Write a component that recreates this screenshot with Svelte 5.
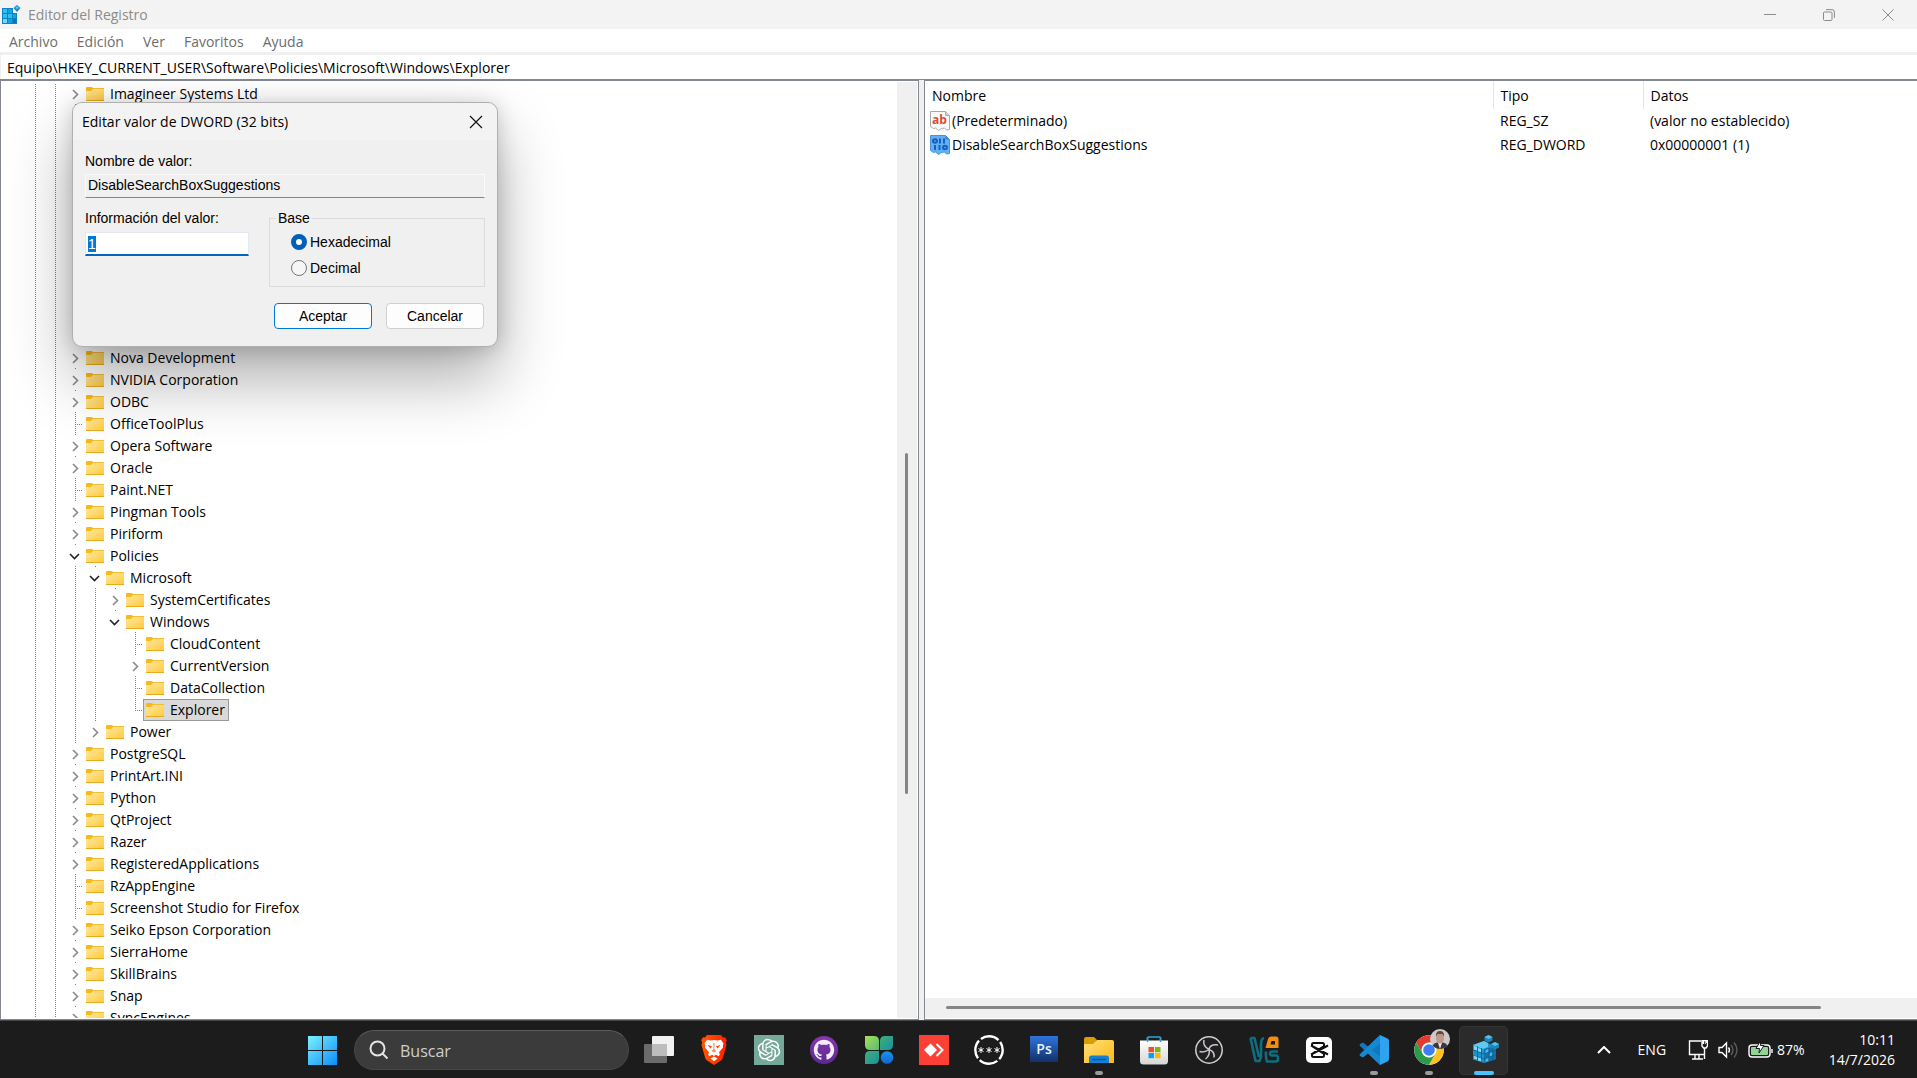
<script lang="ts">
	import { onMount } from 'svelte';

	interface Key {
		name: string;
		level?: number;
		state?: 'closed' | 'open' | 'leaf';
		last?: boolean;
		covered?: number;
	}

	const keys: Key[] = [
		{ name: 'Imagineer Systems Ltd' },
		{ name: '', covered: 11 },
		{ name: 'Nova Development' },
		{ name: 'NVIDIA Corporation' },
		{ name: 'ODBC' },
		{ name: 'OfficeToolPlus', state: 'leaf' },
		{ name: 'Opera Software' },
		{ name: 'Oracle' },
		{ name: 'Paint.NET', state: 'leaf' },
		{ name: 'Pingman Tools' },
		{ name: 'Piriform' },
		{ name: 'Policies', state: 'open' },
		{ name: 'Microsoft', level: 1, state: 'open' },
		{ name: 'SystemCertificates', level: 2 },
		{ name: 'Windows', level: 2, state: 'open', last: true },
		{ name: 'CloudContent', level: 3, state: 'leaf' },
		{ name: 'CurrentVersion', level: 3 },
		{ name: 'DataCollection', level: 3, state: 'leaf' },
		{ name: 'Explorer', level: 3, state: 'leaf', last: true },
		{ name: 'Power', level: 1, last: true },
		{ name: 'PostgreSQL' },
		{ name: 'PrintArt.INI' },
		{ name: 'Python' },
		{ name: 'QtProject' },
		{ name: 'Razer' },
		{ name: 'RegisteredApplications' },
		{ name: 'RzAppEngine', state: 'leaf' },
		{ name: 'Screenshot Studio for Firefox', state: 'leaf' },
		{ name: 'Seiko Epson Corporation' },
		{ name: 'SierraHome' },
		{ name: 'SkillBrains' },
		{ name: 'Snap' },
		{ name: 'SyncEngines' }
	];

	const values = [
		{ name: '(Predeterminado)', type: 'REG_SZ', data: '(valor no establecido)' },
		{ name: 'DisableSearchBoxSuggestions', type: 'REG_DWORD', data: '0x00000001 (1)' }
	];

	const menus = ['Archivo', 'Edición', 'Ver', 'Favoritos', 'Ayuda'];

	const apps = [
		{ id: 'taskview', label: 'Vista de tareas' },
		{ id: 'brave', label: 'Brave' },
		{ id: 'chatgpt', label: 'ChatGPT' },
		{ id: 'github', label: 'GitHub Desktop' },
		{ id: 'clover', label: 'Clover' },
		{ id: 'anydesk', label: 'AnyDesk' },
		{ id: 'stars', label: 'Contraseñas' },
		{ id: 'ps', label: 'Photoshop' },
		{ id: 'files', label: 'Explorador de archivos', open: true },
		{ id: 'store', label: 'Microsoft Store' },
		{ id: 'obs', label: 'OBS Studio' },
		{ id: 'vs', label: 'VS' },
		{ id: 'capcut', label: 'CapCut' },
		{ id: 'vscode', label: 'Visual Studio Code', open: true },
		{ id: 'chrome', label: 'Chrome', open: true },
		{ id: 'regedit', label: 'Editor del Registro', active: true }
	];

	const rowHeight = 22;

	let selected = $state('Explorer');
	let path = $state('Equipo\\HKEY_CURRENT_USER\\Software\\Policies\\Microsoft\\Windows\\Explorer');
	let value = $state('1');
	let base = $state('hex');
	let valueInput: HTMLInputElement;

	// Windows is the last key of its level, so its children carry no guide there
	function guides(level: number): boolean[] {
		return Array.from({ length: level + 2 }, (_, i) => i < 4);
	}

	onMount(() => {
		valueInput.focus();
		valueInput.select();
	});
</script>

{#snippet folder()}
	<svg class="folder" viewBox="0 0 18 14" aria-hidden="true">
		<rect x="0" y="2" width="18" height="12" fill="url(#folder-fill)" />
		<path d="M0 1q0-1 1-1h5l1 1v1l-2 2H0z" fill="#f9b916" />
		<rect x="7" y="1" width="11" height="1" fill="#f3bd3a" />
		<rect x="0" y="13" width="18" height="1" fill="#e9aa1c" />
	</svg>
{/snippet}

<svg class="defs" width="0" height="0" aria-hidden="true">
	<defs>
		<linearGradient id="folder-fill" x1="0" y1="0" x2="1" y2="1">
			<stop offset="0" stop-color="#ffe9a0" />
			<stop offset="1" stop-color="#ffc93c" />
		</linearGradient>
		<linearGradient id="start-fill" x1="0" y1="0" x2="30" y2="30" gradientUnits="userSpaceOnUse">
			<stop offset="0" stop-color="#7df3ff" />
			<stop offset="1" stop-color="#0a8bf8" />
		</linearGradient>
		<linearGradient id="brave-fill">
			<stop offset="0" stop-color="#ff5a00" />
			<stop offset="1" stop-color="#ff2000" />
		</linearGradient>
		<linearGradient id="github-fill" x1="0" y1="0" x2="0" y2="1">
			<stop offset="0" stop-color="#8a35b0" />
			<stop offset="1" stop-color="#5b2a90" />
		</linearGradient>
		<linearGradient id="leaf-a" x1="0" y1="0" x2="1" y2="1">
			<stop offset="0" stop-color="#a5e05a" />
			<stop offset="1" stop-color="#5cba70" />
		</linearGradient>
		<linearGradient id="leaf-b" x1="0" y1="0" x2="1" y2="1">
			<stop offset="0" stop-color="#3fb07c" />
			<stop offset="1" stop-color="#1c8f9c" />
		</linearGradient>
		<linearGradient id="dot-fill" x1="0" y1="0" x2="0" y2="1">
			<stop offset="0" stop-color="#1596ef" />
			<stop offset="1" stop-color="#1463d0" />
		</linearGradient>
		<linearGradient id="ps-fill" x1="0" y1="0" x2="0" y2="1">
			<stop offset="0" stop-color="#2f74dc" />
			<stop offset="1" stop-color="#12306a" />
		</linearGradient>
		<linearGradient id="files-fill" x1="0" y1="0" x2="1" y2="1">
			<stop offset="0" stop-color="#ffe07a" />
			<stop offset="1" stop-color="#fdb913" />
		</linearGradient>
		<linearGradient id="store-fill" x1="0" y1="0" x2="0" y2="1">
			<stop offset="0" stop-color="#ffffff" />
			<stop offset="1" stop-color="#d6d6d6" />
		</linearGradient>
	</defs>
</svg>

<div class="desktop">
	<main class="window">
		<header class="titlebar">
			<svg class="app-icon" viewBox="0 0 20 20" aria-hidden="true">
				<rect x="1" y="3" width="15" height="16" fill="#0a84c4" />
				<path d="M2 4h4v4H2zM2 9h4v4H2zM7 9h4v4H7z" fill="#35bdf2" />
				<path d="M7 4h4v4H7zM12 9h3v4h-3zM7 14h4v4H7z" fill="#12a3e6" />
				<path d="M2 14h4v4H2z" fill="#6fd9fb" />
				<path d="M12 14h3v4h-3z" fill="#0478b8" />
				<path d="M12 2h4v6h-4z" fill="#f3f3f3" />
				<path d="M16 0l3.500 3-3.500 4-3.500-4z" fill="#1787bf" />
				<path d="M16 1l2 2-2 1-2-1z" fill="#5fc8ee" />
			</svg>
			<h1>Editor del Registro</h1>
			<div class="caption-buttons">
				<button aria-label="Minimizar">
					<svg viewBox="0 0 12 12"><path d="M0 5.5h12" /></svg>
				</button>
				<button aria-label="Restaurar">
					<svg viewBox="0 0 12 12">
						<rect x="0.5" y="3" width="8.5" height="8.5" rx="1" />
						<path d="M3 .6h6q2.400 0 2.400 2.400v6" />
					</svg>
				</button>
				<button aria-label="Cerrar">
					<svg viewBox="0 0 12 12"><path d="M.5.5l11 11M11.500.5l-11 11" /></svg>
				</button>
			</div>
		</header>

		<nav class="menubar">
			{#each menus as menu (menu)}
				<button>{menu}</button>
			{/each}
		</nav>

		<input class="address" aria-label="Ruta" bind:value={path} />

		<div class="panes">
			<section class="tree-pane">
				<ul class="tree">
					{#each keys as key, i (i)}
						{#if key.covered}
							<li class="row" style:height="{key.covered * rowHeight}px">
								<span class="guide"></span>
								<span class="guide"></span>
							</li>
						{:else}
							{@const state = key.state ?? 'closed'}
							<li class="row">
								{#each guides(key.level ?? 0) as drawn, g (g)}
									<span class={drawn ? 'guide' : 'blank'}></span>
								{/each}
								{#if state === 'leaf'}
									<span class="branch" class:last={key.last}></span>
								{:else}
									<button class="toggle" aria-label={key.name} aria-expanded={state === 'open'}>
										<svg viewBox="0 0 18 22">
											{#if state === 'open'}
												<path class="open" d="M5 9l4.500 4.500L14 9" />
												<rect x="30" y="21" width="1" height="1" />
											{:else}
												<path d="M8 7l4.500 4.500L8 16" />
											{/if}
											{#if !key.last}
												<rect x="10" y="21" width="1" height="1" />
											{/if}
										</svg>
									</button>
								{/if}
								<button
									class="key"
									class:selected={selected === key.name}
									onclick={() => (selected = key.name)}
								>
									{@render folder()}
									{key.name}
								</button>
							</li>
						{/if}
					{/each}
				</ul>
				<div class="vscroll"><span></span></div>
			</section>

			<section class="value-pane">
				<table>
					<colgroup>
						<col class="col-name" />
						<col class="col-type" />
						<col />
					</colgroup>
					<thead>
						<tr><th>Nombre</th><th>Tipo</th><th>Datos</th></tr>
					</thead>
					<tbody>
						{#each values as row, i (row.name)}
							<tr>
								<td>
									<span class="value-name">
										<svg viewBox="0 0 20 20" aria-hidden="true">
											{#if i === 0}
												<path
													d="M.5.5h15l4 4v14l-3 .5-2-2-3 .5-3 2-3-2.500-2 .5-3-2z"
													fill="#fafafa"
													stroke="#a8a8a8"
												/>
												<path d="M15.500.5v4h4" fill="#d5d5d5" stroke="#a8a8a8" />
												<text x="2" y="13" class="glyph-ab">ab</text>
											{:else}
												<path
													d="M.5.5h15l4 4v14l-3 .5-2-2-3 .5-3 2-3-2.500-2 .5-3-2z"
													fill="#62b0f4"
													stroke="#4a93d4"
												/>
												<path d="M15.500.5v4h4" fill="#3f86c8" />
												<ellipse cx="5" cy="6" rx="2" ry="1.700" class="bits" />
												<ellipse cx="15" cy="12.500" rx="2" ry="1.700" class="bits" />
												<path d="M10 3.500v5M14 3.500v5M5 10v5M9.500 10v5" class="bits" />
											{/if}
										</svg>
										{row.name}
									</span>
								</td>
								<td>{row.type}</td>
								<td>{row.data}</td>
							</tr>
						{/each}
					</tbody>
				</table>
				<div class="hscroll"><span></span></div>
			</section>
		</div>
	</main>

	<div class="dialog" role="dialog" aria-labelledby="dialog-title">
		<header>
			<h2 id="dialog-title">Editar valor de DWORD (32 bits)</h2>
			<button aria-label="Cerrar">
				<svg viewBox="0 0 12 12"><path d="M0 0l12 12M12 0L0 12" /></svg>
			</button>
		</header>
		<form onsubmit={(e) => e.preventDefault()}>
			<label for="value-name">Nombre de valor:</label>
			<input id="value-name" readonly value="DisableSearchBoxSuggestions" />
			<div class="columns">
				<div class="data">
					<label for="value-data">Información del valor:</label>
					<input id="value-data" bind:this={valueInput} bind:value />
				</div>
				<fieldset>
					<legend>Base</legend>
					<label><input type="radio" value="hex" bind:group={base} />Hexadecimal</label>
					<label><input type="radio" value="dec" bind:group={base} />Decimal</label>
				</fieldset>
			</div>
			<div class="actions">
				<button class="default">Aceptar</button>
				<button type="button">Cancelar</button>
			</div>
		</form>
	</div>

	<footer class="taskbar">
		<button class="app" aria-label="Inicio">
			<svg viewBox="0 0 30 30">
				<path d="M0 1h14v14H0zM15 1h14v14H15zM0 16h14v14H0zM15 16h14v14H15z" fill="url(#start-fill)" />
			</svg>
		</button>
		<label class="search">
			<svg viewBox="0 0 20 20" aria-hidden="true">
				<circle cx="8.500" cy="8.500" r="7" />
				<path d="M13.500 13.500l5 5" />
			</svg>
			<input type="text" placeholder="Buscar" aria-label="Buscar" />
		</label>

		{#each apps as app (app.id)}
			<button class="app" class:open={app.open} class:active={app.active} aria-label={app.label}>
				<svg viewBox="0 0 30 30">
					{#if app.id === 'taskview'}
						<rect x="8" y="1" width="22" height="20" rx="1" fill="#f2f2f2" />
						<rect x="0" y="9" width="23" height="19" rx="1" fill="#6b6b6b" />
						<rect x="8" y="9" width="15" height="12" fill="#bdbdbd" />
					{:else if app.id === 'brave'}
						<path
							d="M8 0h14l2 2.500 2-.3 1.800 3-1 2.300.7 2.500-3.500 12.500q-.6 2-2 3L15 30l-7-4.500q-1.400-1-2-3L2.500 10l.7-2.500-1-2.300 1.800-3 2 .3z"
							fill="url(#brave-fill)"
						/>
						<path
							d="M15 5l3.500.6L22 4.800l2.500 3.700-.7 2 .2 2-4 4.700.8 2-1 2-3-1.500-1.800 1.300-1.800-1.300-3 1.500-1-2 .8-2-4-4.700.2-2-.7-2L8 4.800l3.500.8z"
							fill="#fff"
						/>
						<path d="M8.500 10l4.500 1.200-1.500 2.300zM21.500 10L17 11.200l1.500 2.300z" fill="#ff4410" />
						<path d="M14.300 8h1.400l-.3 6 2 2-2.400 1.600-2.400-1.600 2-2z" fill="#ff8a64" />
						<path d="M15 21.500l3.500 2-3.500 2.800-3.500-2.800z" fill="#fff" />
					{:else if app.id === 'chatgpt'}
						<rect width="30" height="30" fill="#74a99a" />
						<path
							transform="translate(3.700 3.700) scale(.94)"
							fill="#fff"
							d="M22.2819 9.8211a5.9847 5.9847 0 0 0-.5157-4.9108 6.0462 6.0462 0 0 0-6.5098-2.9A6.0651 6.0651 0 0 0 4.9807 4.1818a5.9847 5.9847 0 0 0-3.9977 2.9 6.0462 6.0462 0 0 0 .7427 7.0966 5.98 5.98 0 0 0 .511 4.9107 6.051 6.051 0 0 0 6.5146 2.9001A5.9847 5.9847 0 0 0 13.2599 24a6.0557 6.0557 0 0 0 5.7718-4.2058 5.9894 5.9894 0 0 0 3.9977-2.9001 6.0557 6.0557 0 0 0-.7475-7.0729zm-9.022 12.6081a4.4755 4.4755 0 0 1-2.8764-1.0408l.1419-.0804 4.7783-2.7582a.7948.7948 0 0 0 .3927-.6813v-6.7369l2.02 1.1686a.071.071 0 0 1 .038.0615v5.5826a4.504 4.504 0 0 1-4.4945 4.4849zm-9.6607-4.1254a4.4708 4.4708 0 0 1-.5346-3.0137l.142.0852 4.783 2.7582a.7712.7712 0 0 0 .7806 0l5.8428-3.3685v2.3324a.0804.0804 0 0 1-.0332.0615L9.74 19.9502a4.4992 4.4992 0 0 1-6.1408-1.6464zM2.3408 7.8956a4.485 4.485 0 0 1 2.3655-1.9728V11.6a.7664.7664 0 0 0 .3879.6765l5.8144 3.3543-2.0201 1.1685a.0757.0757 0 0 1-.071 0l-4.8303-2.7865A4.504 4.504 0 0 1 2.3408 7.8956zm16.5963 3.8558L13.1038 8.364 15.1192 7.2a.0757.0757 0 0 1 .071 0l4.8303 2.7913a4.4944 4.4944 0 0 1-.6765 8.1042v-5.6772a.79.79 0 0 0-.407-.667zm2.0107-3.0231l-.142-.0852-4.7735-2.7818a.7759.7759 0 0 0-.7854 0L9.409 9.2297V6.8974a.0662.0662 0 0 1 .0284-.0615l4.8303-2.7866a4.4992 4.4992 0 0 1 6.6802 4.66zM8.3065 12.863l-2.02-1.1638a.0804.0804 0 0 1-.038-.0567V6.0742a4.4992 4.4992 0 0 1 7.3757-3.4537l-.142.0805L8.704 5.459a.7948.7948 0 0 0-.3927.6813zm1.0976-2.3654l2.602-1.4998 2.6069 1.4998v2.9994l-2.5974 1.4997-2.6067-1.4997Z"
						/>
					{:else if app.id === 'github'}
						<circle cx="15" cy="15" r="14" fill="url(#github-fill)" />
						<path
							transform="translate(4.800 4.500) scale(.85)"
							fill="#f2edf6"
							d="M12 .297c-6.63 0-12 5.373-12 12 0 5.303 3.438 9.8 8.205 11.385.6.113.82-.258.82-.577 0-.285-.01-1.04-.015-2.04-3.338.724-4.042-1.61-4.042-1.61C4.422 18.07 3.633 17.7 3.633 17.7c-1.087-.744.084-.729.084-.729 1.205.084 1.838 1.236 1.838 1.236 1.07 1.835 2.809 1.305 3.495.998.108-.776.417-1.305.76-1.605-2.665-.3-5.466-1.332-5.466-5.93 0-1.31.465-2.38 1.235-3.22-.135-.303-.54-1.523.105-3.176 0 0 1.005-.322 3.3 1.23.96-.267 1.98-.399 3-.405 1.02.006 2.04.138 3 .405 2.28-1.552 3.285-1.23 3.285-1.23.645 1.653.24 2.873.12 3.176.765.84 1.23 1.91 1.23 3.22 0 4.61-2.805 5.625-5.475 5.92.42.36.81 1.096.81 2.22 0 1.606-.015 2.896-.015 3.286 0 .315.21.69.825.57C20.565 22.092 24 17.592 24 12.297c0-6.627-5.373-12-12-12"
						/>
					{:else if app.id === 'clover'}
						<path d="M1 1h9q5 0 5 5v9H6q-5 0-5-5z" fill="url(#leaf-a)" />
						<path d="M29 1v9q0 5-5 5h-8V6q0-5 5-5z" fill="url(#leaf-b)" />
						<path d="M1 29v-8q0-5 5-5h9v8q0 5-5 5z" fill="url(#leaf-b)" />
						<circle cx="23" cy="22.500" r="6.300" fill="url(#dot-fill)" />
					{:else if app.id === 'anydesk'}
						<rect width="30" height="30" fill="#fb4136" />
						<path d="M11.500 8.500L18 15l-6.500 6.500L5 15z" fill="#fff" />
						<path d="M17.500 9l6 6-6 6" class="anydesk-arrow" />
					{:else if app.id === 'stars'}
						<circle cx="15" cy="15" r="13.700" class="stars-ring" />
						<path
							d="M7 12v6M4.500 13.500l5 3M9.500 13.500l-5 3M15 12v6M12.500 13.500l5 3M17.500 13.500l-5 3M23 12v6M20.500 13.500l5 3M25.500 13.500l-5 3"
							stroke="#fff"
							stroke-width="1"
						/>
					{:else if app.id === 'ps'}
						<rect x="1" y="1" width="28" height="26" fill="url(#ps-fill)" />
						<text x="15" y="19" class="glyph-ps">Ps</text>
					{:else if app.id === 'files'}
						<path d="M0 4q0-2 2-2h8l3 3-3 4H0z" fill="#dc9c05" />
						<path d="M0 9h9l4-4h15q2 0 2 2v21H0z" fill="url(#files-fill)" />
						<path d="M5 28v-5q0-2.500 2.500-2.500h15q2.500 0 2.500 2.500v5z" fill="#1282d6" />
						<path d="M9 24.500h12" stroke="#0b5299" stroke-width="1.500" stroke-linecap="round" />
					{:else if app.id === 'store'}
						<path d="M8.500 6V3q0-1 1-1h11q1 0 1 1v3" class="store-handle" />
						<path d="M1 5.500h28V26q0 3.500-3.500 3.500h-21Q1 29.500 1 26z" fill="url(#store-fill)" />
						<path d="M8.500 2v5M21.500 2v5" stroke="#26a5e0" stroke-width="1.500" />
						<path d="M9.500 12h5.500v5.200H9.500z" fill="#f25022" />
						<path d="M16 12h5.500v5.200H16z" fill="#7fba00" />
						<path d="M9.500 18h5.500v5.200H9.500z" fill="#00a4ef" />
						<path d="M16 18h5.500v5.200H16z" fill="#ffb900" />
					{:else if app.id === 'obs'}
						<circle cx="15" cy="15" r="13.200" fill="#211f22" stroke="#cfcfcf" stroke-width="1.500" />
						<path
							d="M10 5q-1.500 6 5 9.500M15 14.500q1-5.500 9-4.500M15 14.500q1.500 5.500-3.500 9.500M15 14.500q-5 3.500-9.500 2M15 14.500q6 2 5 8"
							fill="none"
							stroke="#c8c8c8"
							stroke-width="1.500"
						/>
					{:else if app.id === 'vs'}
						<path d="M1.500 3h4l4.500 19M1.500 3l5 23h4l1.500-4V9q0-5 3-6" class="vs-line" />
						<path d="M29 16.500h-5.500q-2.500 0-2.500 2t2.500 2h3.500q2 0 2 3t-2 3H18q-1.500-4-1-10" class="vs-line" />
						<path
							d="M29.500 13H16.500l2.500-9q.6-2.500 3-2.500h5q2.500 0 2.500 2.500zM22.500 6l-1 3.500H26V6z"
							fill="#f28c13"
							fill-rule="evenodd"
						/>
					{:else if app.id === 'capcut'}
						<rect x="2" y="2" width="26" height="26" rx="5" fill="#fff" />
						<path
							d="M24 10.500L8 19v1.500q0 1.500 1.500 1.500h9q1.500 0 1.500-1.500V19L7 10.500M24 19.500L8 11V9.500Q8 8 9.500 8h9Q20 8 20 9.500V11L7 19.500"
							class="capcut-line"
						/>
					{:else if app.id === 'vscode'}
						<path d="M21 0l-12 11.500-5-4-2.500 1.300q-1.800 1 0 2.700L21.500 30z" fill="#1277bd" />
						<path d="M21 30L9 18.500l-5 4-2.500-1.300q-1.800-1 0-2.700L21 0v8.500L13 15l8 6.500z" fill="#1489d2" />
						<path d="M21 0l7.500 3.500Q30 4.300 30 6v18q0 1.700-1.500 2.500L21 30z" fill="#2ea3f0" />
					{:else if app.id === 'chrome'}
						<circle cx="15" cy="15" r="14.800" fill="#fff" />
						<path d="M2.200 7.600A14.800 14.800 0 0 1 27.800 7.600H15A7.400 7.400 0 0 0 8.600 18.700z" fill="#e33b2e" />
						<path d="M27.800 7.600A14.800 14.800 0 0 1 15 29.800l6.400-11.100A7.400 7.400 0 0 0 15 7.600z" fill="#fcc31e" />
						<path d="M15 29.800A14.800 14.800 0 0 1 2.200 7.600l6.400 11.100a7.400 7.400 0 0 0 12.800 0z" fill="#2a9c48" />
						<circle cx="15" cy="15" r="7.200" fill="#fff" />
						<circle cx="15" cy="15" r="5.800" fill="#3d7ff0" />
						<circle cx="26" cy="4" r="10" fill="#cfc8c8" />
						<path d="M18.500 10.500q2-3 5-3h5q3 0 5 3a10 10 0 0 1-15 0z" fill="#3b3638" />
						<path d="M24 8h4l-2 6z" fill="#e9e6e6" />
						<ellipse cx="26" cy="3" rx="4" ry="5.500" fill="#bf9a8c" />
						<path d="M22 1.500q-.5-5.500 4-5.500t4 5.500l-1.500-2.500h-5z" fill="#5b4a44" />
					{:else}
						<path d="M4 10l11-4 8 4 4 2v12l-12 4-11-3.500z" fill="#1f94cb" />
						<path d="M4 10l11-4 4 2v4l-5 2z" fill="#5fc9f0" />
						<path d="M15 14l12-3v13l-12 4z" fill="#1273ab" />
						<path d="M5 11l3 1v3.500l-3-1zM5 20l3 1v3.500l-3-1zM9 22l4 1v3.500l-4-1zM9 13l3 1v3.500l-3-1z" fill="#7fd8f7" />
						<path d="M16.500 15l3-1v3.500l-3 1zM20.500 18l3-1v3.500l-3 1zM16.500 23.500l3-1V26l-3 1z" fill="#45b7e8" />
						<path d="M8.500 11.500v14M12.500 13v14M20 13v13M23.700 12v13M4 15l11 4 12-4M4 20l11 4 12-4" class="reg-grid" />
						<path d="M19.500 0l4 2v3.500l-4 2-4-2V2z" fill="#1b86bd" />
						<path d="M19.500 0l4 2-4 2-4-2z" fill="#55bfe8" />
						<path d="M26 7l4 2v3.500l-4 2-4-2V9z" fill="#1b86bd" />
						<path d="M26 7l4 2-4 2-4-2z" fill="#55bfe8" />
					{/if}
				</svg>
			</button>
		{/each}

		<div class="tray">
			<button aria-label="Mostrar iconos ocultos">
				<svg width="14" height="8" viewBox="0 0 14 8"><path d="M1 7l6-6 6 6" class="tray-line thick" /></svg>
			</button>
			<button class="language">ENG</button>
			<button class="status" aria-label="Red, volumen y batería">
				<svg width="20" height="20" viewBox="0 0 20 20">
					<path d="M13 1H1.500v13.500H16M7 15v3.500M11 15v3.500M4 19h11M16.500 8v11" class="tray-line" />
					<path d="M14 .5h5.500V6L18 8h-2.500L14 6zM15.500.5v3.500M18 .5v3.500" class="tray-line" />
				</svg>
				<svg width="20" height="18" viewBox="0 0 20 18">
					<path d="M1 6.500h3L8.500 2v14L4 11.500H1zM10.500 6.500q2 2.500 0 5" class="tray-line" />
					<path d="M13 4q4 5 0 10M16 1.500q6 7.500 0 15" class="tray-line faded" />
				</svg>
				<svg width="25" height="18" viewBox="0 0 25 18">
					<rect x="1" y="4" width="21" height="12" rx="3" class="tray-line" />
					<rect x="3" y="6" width="17" height="8" rx="1" fill="#8fd694" />
					<path d="M24 8v4" class="tray-line" />
					<path d="M12.500 0L8 7.500h3.500L11 12l5-7.500h-3.500z" fill="#fff" stroke="#1c1c1c" />
				</svg>
				<span>87%</span>
			</button>
			<button class="clock">
				<span>10:11</span>
				<span>14/7/2026</span>
			</button>
		</div>
	</footer>
</div>

<style>
	:global(body) {
		margin: 0;
		background: #fff;
	}

	.desktop {
		position: relative;
		display: flex;
		flex-direction: column;
		height: 100vh;
		overflow: hidden;
		font-family: 'Segoe UI', 'Open Sans', sans-serif;
		font-size: 14px;
		line-height: 20px;
		color: #000;
	}

	.defs {
		position: absolute;
	}

	button,
	input {
		font: inherit;
		color: inherit;
		margin: 0;
		padding: 0;
		border: 0;
		border-radius: 0;
		background: none;
		outline: none;
		box-sizing: border-box;
	}

	svg {
		display: block;
		flex: none;
	}

	.window {
		flex: 1;
		min-height: 0;
		display: flex;
		flex-direction: column;
	}

	.titlebar {
		display: flex;
		align-items: center;
		height: 29px;
		padding-left: 1px;
		background: #f3f3f3;
		color: #8b8b8b;
	}

	.app-icon {
		width: 20px;
		height: 20px;
	}

	h1,
	h2 {
		margin: 0;
		font-size: 14px;
		font-weight: 400;
	}

	h1 {
		flex: 1;
		padding-left: 7px;
	}

	.caption-buttons {
		display: flex;
	}

	.caption-buttons button {
		display: grid;
		place-items: center;
		width: 59px;
		height: 28px;
	}

	.caption-buttons svg {
		width: 12px;
		height: 12px;
		fill: none;
		stroke: #8b8b8b;
	}

	.menubar {
		display: flex;
		gap: 3px;
		height: 23px;
		padding: 2px 0 0 1px;
		box-sizing: border-box;
		color: #6d6d6d;
	}

	.menubar button {
		padding: 0 8px;
	}

	.address {
		height: 27px;
		padding: 0 6px;
		border-top: 3px solid #f0f0f0;
		border-left: 1px solid #f0f0f0;
	}

	.panes {
		flex: 1;
		min-height: 0;
		display: flex;
		gap: 5px;
		border-top: 1px solid #828790;
		background: #f0f0f0;
	}

	.tree-pane,
	.value-pane {
		box-sizing: border-box;
		border: 1px solid #828790;
		background: #fff;
		overflow: hidden;
	}

	/* the splitter keeps its place when the window is resized */
	.tree-pane {
		display: flex;
		width: 919px;
		max-width: 60%;
		padding: 1px 1px 1px 0;
	}

	.tree {
		flex: 1;
		height: 100%;
		margin: 0;
		padding: 1px 0 0 24px;
		box-sizing: border-box;
		list-style: none;
		overflow: hidden;
	}

	.row {
		display: flex;
		height: 22px;
	}

	.guide,
	.blank {
		width: 20px;
		flex: none;
	}

	.guide {
		background: repeating-linear-gradient(#fff 0 1px, #808080 1px 2px) 10px 0 / 1px 100% no-repeat;
	}

	.branch {
		width: 18px;
		flex: none;
		background:
			repeating-linear-gradient(#fff 0 1px, #808080 1px 2px) 10px 0 / 1px 100% no-repeat,
			repeating-linear-gradient(90deg, #808080 0 1px, #fff 1px 2px) 10px 11px / 8px 1px no-repeat;
	}

	.branch.last {
		background-size:
			1px 12px,
			8px 1px;
	}

	.toggle svg {
		width: 18px;
		height: 22px;
		overflow: visible;
		fill: none;
		stroke: #8a8a8a;
		stroke-width: 1.6;
	}

	.toggle .open {
		stroke: #222;
	}

	.toggle rect {
		fill: #808080;
		stroke: none;
	}

	.key {
		display: flex;
		align-items: center;
		gap: 6px;
		padding: 0 3px 0 2px;
		border: 1px solid transparent;
		white-space: nowrap;
	}

	.key.selected {
		background: #d9d9d9;
		border-color: #999;
	}

	.folder {
		width: 18px;
		height: 14px;
	}

	.vscroll {
		width: 20px;
		padding-top: 371px;
		box-sizing: border-box;
		background: #f0f0f0;
	}

	.vscroll span {
		display: block;
		width: 3px;
		height: 341px;
		margin-left: 8px;
		border-radius: 2px;
		background: #858585;
	}

	.value-pane {
		flex: 1;
		display: flex;
		flex-direction: column;
		justify-content: space-between;
		border-right: 0;
	}

	table {
		width: 100%;
		table-layout: fixed;
		border-collapse: collapse;
	}

	.col-name {
		width: 568px;
	}

	.col-type {
		width: 150px;
	}

	th,
	td {
		height: 24px;
		padding: 0 7px;
		box-sizing: border-box;
		text-align: left;
		font-weight: 400;
	}

	th {
		height: 28px;
		padding-top: 1px;
		border-right: 1px solid #e5e5e5;
	}

	th:last-child {
		border-right: 0;
	}

	.value-name {
		display: flex;
		align-items: center;
		gap: 2px;
		margin-left: -2px;
	}

	.value-name svg {
		width: 20px;
		height: 20px;
	}

	.glyph-ab {
		font: bold 12px 'Open Sans', sans-serif;
		fill: #d9502f;
	}

	.bits {
		fill: none;
		stroke: #1560c0;
		stroke-width: 2;
	}

	.hscroll {
		height: 21px;
		padding: 8px 96px 0 21px;
		box-sizing: border-box;
		background: #f0f0f0;
		border-bottom: 1px solid #fff;
	}

	.hscroll span {
		display: block;
		height: 3px;
		border-radius: 2px;
		background: #858585;
	}

	/* floats over the tree */
	.dialog {
		position: absolute;
		left: 72px;
		top: 102px;
		width: 426px;
		box-sizing: border-box;
		border: 1px solid #b0b0b0;
		border-radius: 10px;
		background: #f0f0f0;
		box-shadow:
			0 32px 64px rgb(0 0 0 / 32%),
			0 2px 20px rgb(0 0 0 / 18%);
		font-family: 'Liberation Sans', Arial, sans-serif;
		font-size: 14px;
		line-height: 16px;
	}

	.dialog header {
		display: flex;
		align-items: center;
		justify-content: space-between;
		height: 37px;
		padding: 0 15px 0 9px;
		border-radius: 10px 10px 0 0;
		background: #f3f3f3;
		font-family: 'Segoe UI', 'Open Sans', sans-serif;
	}

	.dialog header svg {
		width: 12px;
		height: 12px;
		overflow: visible;
		fill: none;
		stroke: #111;
		stroke-width: 1.2;
	}

	form {
		display: flex;
		flex-direction: column;
		padding: 13px 12px 17px;
	}

	#value-name {
		height: 24px;
		margin-top: 5px;
		padding: 0 2px 2px;
		border: 1px solid #fafafa;
		border-bottom-color: #868686;
	}

	.columns {
		display: grid;
		grid-template-columns: 164px 1fr;
		gap: 20px;
		margin-top: 12px;
	}

	.data {
		display: flex;
		flex-direction: column;
		gap: 6px;
	}

	#value-data {
		height: 24px;
		padding: 0 2px;
		border: 1px solid #e3e9ef;
		border-bottom: 2px solid #0067c0;
		background: #fff;
	}

	#value-data::selection {
		background: #0078d7;
		color: #fff;
	}

	fieldset {
		display: flex;
		flex-direction: column;
		gap: 10px;
		min-width: 0;
		height: 77px;
		box-sizing: border-box;
		margin: 0;
		padding: 8px 0 0 21px;
		border: 1px solid #dcdcdc;
	}

	legend {
		margin-left: -15px;
		padding: 0 2px;
	}

	fieldset label {
		display: flex;
		align-items: center;
		gap: 3px;
	}

	fieldset input {
		appearance: none;
		width: 16px;
		height: 16px;
		border: 1px solid #767676;
		border-radius: 50%;
		background: #f6f6f6;
	}

	fieldset input:checked {
		border: 5px solid #005fb8;
		background: #fff;
	}

	.actions {
		display: flex;
		justify-content: flex-end;
		gap: 14px;
		margin-top: 16px;
		padding-right: 1px;
	}

	.actions button {
		width: 98px;
		height: 26px;
		border: 1px solid #d0d0d0;
		border-radius: 4px;
		background: #fdfdfd;
	}

	.actions .default {
		border-color: #0078d4;
	}

	.taskbar {
		display: flex;
		align-items: center;
		height: 58px;
		padding: 1px 10px 0 295px;
		box-sizing: border-box;
		border-top: 1px solid #44464a;
		background: #1c1c1c;
		color: #fff;
	}

	.app {
		position: relative;
		display: grid;
		place-items: center;
		flex: none;
		width: 49px;
		height: 49px;
		margin: 0 3px;
		border-radius: 5px;
	}

	.app svg {
		width: 30px;
		height: 30px;
		overflow: visible;
	}

	.app.open::after,
	.app.active::after {
		content: '';
		position: absolute;
		bottom: 0;
		width: 8px;
		height: 4px;
		border-radius: 2px;
		background: #9a9a9a;
	}

	.app.active {
		background: #2b2b2b;
		box-shadow: inset 0 0 0 1px #343434;
	}

	.app.active::after {
		width: 20px;
		background: #4cc2ff;
	}

	.search {
		display: flex;
		align-items: center;
		gap: 11px;
		width: 275px;
		height: 40px;
		margin: 0 2px 0 4px;
		padding: 0 14px;
		box-sizing: border-box;
		border: 1px solid #474747;
		border-top-color: #5c5c5c;
		border-radius: 20px;
		background: #3b3b3b;
		font-size: 16px;
	}

	.search svg {
		width: 20px;
		height: 20px;
		fill: none;
		stroke: #e4e4e4;
		stroke-width: 2;
	}

	.search input {
		flex: 1;
		min-width: 0;
		padding-top: 2px;
	}

	.search input::placeholder {
		color: #cfcfcf;
		opacity: 1;
	}

	.anydesk-arrow {
		fill: none;
		stroke: #fff;
		stroke-width: 2;
	}

	.stars-ring {
		fill: none;
		stroke: #fff;
		stroke-width: 2.4;
		stroke-dasharray: 19 2.52;
		stroke-dashoffset: 9;
	}

	.glyph-ps {
		font: 600 14px 'Open Sans', sans-serif;
		fill: #e8f1ff;
		text-anchor: middle;
	}

	.store-handle {
		fill: none;
		stroke: #26a5e0;
		stroke-width: 1.6;
	}

	.vs-line {
		fill: none;
		stroke: #0e6e80;
		stroke-width: 2.6;
		stroke-linejoin: round;
	}

	.capcut-line {
		fill: none;
		stroke: #111;
		stroke-width: 2;
	}

	.reg-grid {
		fill: none;
		stroke: #0f5f90;
		stroke-width: 0.8;
	}

	.tray {
		display: flex;
		align-items: center;
		margin-left: auto;
	}

	.language {
		margin-left: 27px;
	}

	.status {
		display: flex;
		align-items: center;
		gap: 10px;
		margin-left: 22px;
	}

	.status span {
		margin-left: -6px;
	}

	.clock {
		display: flex;
		flex-direction: column;
		align-items: flex-end;
		margin-left: 24px;
		padding-right: 12px;
	}

	.tray-line {
		fill: none;
		stroke: #fff;
		stroke-width: 1.4;
	}

	.tray-line.thick {
		stroke-width: 2;
	}

	.tray-line.faded {
		stroke: #5c5c5c;
	}
</style>
